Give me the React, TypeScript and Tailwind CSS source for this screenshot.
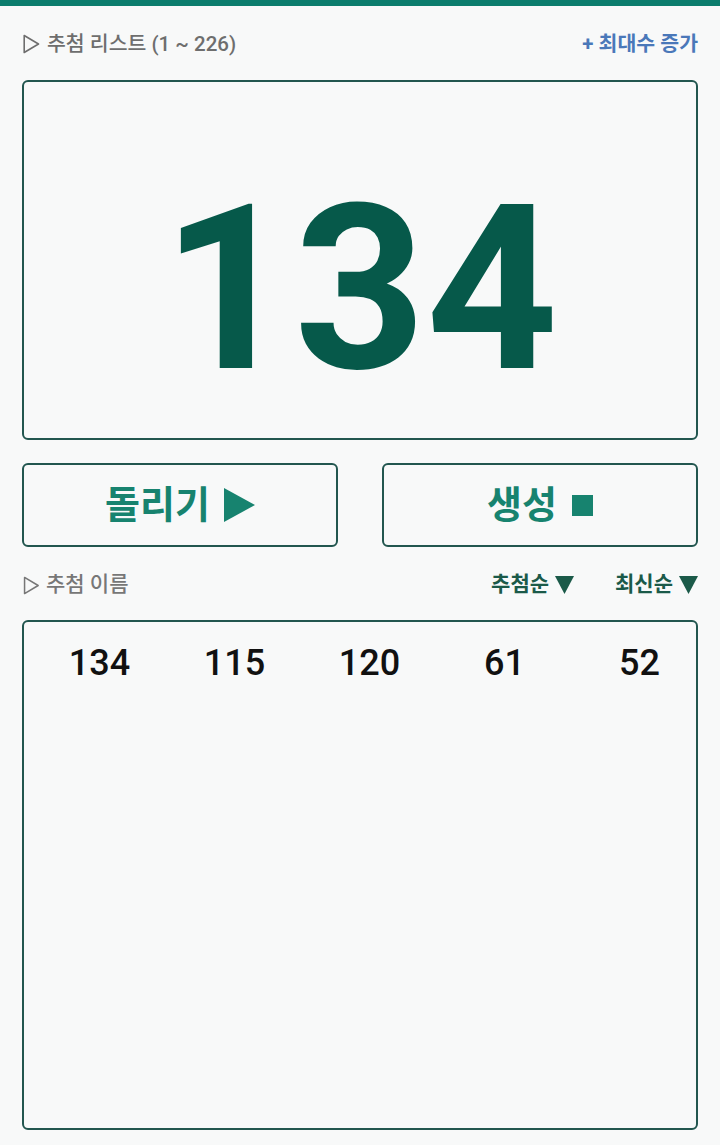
import React from 'react';

const FONT = "font-['Roboto','Noto_Sans_CJK_KR',sans-serif]";

const OutlineTriangle: React.FC<{ className?: string }> = ({ className }) => (
  <svg viewBox="0 0 17 20" className={className} fill="none">
    <path d="M1.2 1.5 L15.5 10 L1.2 18.5 Z" stroke="currentColor" strokeWidth="1.6" strokeLinejoin="round" />
  </svg>
);

const SortArrow: React.FC = () => (
  <svg viewBox="0 0 19 18" className="w-[19px] h-[18px]">
    <path d="M0 0 L19 0 L9.5 18 Z" fill="currentColor" />
  </svg>
);

const drawn = [134, 115, 120, 61, 52];

const App: React.FC = () => {
  return (
    <div className={`min-h-[1145px] bg-[#f8f9f9] ${FONT}`}>
      <div className="h-[6px] bg-[#0b7d6d]" />

      <div className="px-[22px]">
        {/* header */}
        <div className="mt-[18px] h-[40px] flex items-center justify-between">
          <div className="flex items-center gap-[7px] text-[#6e6e6e]">
            <OutlineTriangle className="w-[17px] h-[20px] ml-[1px]" />
            <span className="text-[20.5px] font-medium">추첨 리스트 (1 ~ 226)</span>
          </div>
          <button className="text-[20.5px] font-bold text-[#4a78b9]">+ 최대수 증가</button>
        </div>

        {/* current number */}
        <div className="mt-[16px] h-[360px] border-2 border-[#22564f] rounded-[6px] flex justify-center pt-[93px]">
          <span className="text-[230px] leading-none font-bold text-[#06594a] font-['Roboto',sans-serif]">
            134
          </span>
        </div>

        {/* buttons */}
        <div className="mt-[23px] grid grid-cols-2 gap-[44px]">
          <button className="h-[84px] border-2 border-[#22564f] rounded-[6px] flex items-center justify-center gap-[14px] text-[#17836f]">
            <span className="text-[38px] font-bold leading-none">돌리기</span>
            <svg viewBox="0 0 31 34" className="w-[31px] h-[34px]">
              <path d="M0 0 L31 17 L0 34 Z" fill="currentColor" />
            </svg>
          </button>
          <button className="h-[84px] border-2 border-[#22564f] rounded-[6px] flex items-center justify-center gap-[15px] text-[#17836f]">
            <span className="text-[38px] font-bold leading-none">생성</span>
            <span className="w-[21px] h-[21px] bg-[#17836f]" />
          </button>
        </div>

        {/* list header */}
        <div className="mt-[20px] h-[36px] flex items-center justify-between">
          <div className="flex items-center gap-[6px] text-[#777777]">
            <OutlineTriangle className="w-[17px] h-[19px] ml-[1px]" />
            <span className="text-[21px] font-medium">추첨 이름</span>
          </div>
          <div className="flex items-center gap-[41px] text-[#1b5a49]">
            <button className="flex items-center gap-[6px]">
              <span className="text-[21px] font-bold">추첨순</span>
              <SortArrow />
            </button>
            <button className="flex items-center gap-[6px]">
              <span className="text-[21px] font-bold">최신순</span>
              <SortArrow />
            </button>
          </div>
        </div>

        {/* drawn list */}
        <div className="mt-[17px] h-[510px] border-2 border-[#22564f] rounded-[6px] pt-[21px] pl-[8px]">
          <div className="grid grid-cols-[repeat(5,135px)]">
            {drawn.map((n) => (
              <span key={n} className="text-center text-[36px] leading-[40px] font-medium text-[#111111]">
                {n}
              </span>
            ))}
          </div>
        </div>
      </div>
    </div>
  );
};

export default App;
